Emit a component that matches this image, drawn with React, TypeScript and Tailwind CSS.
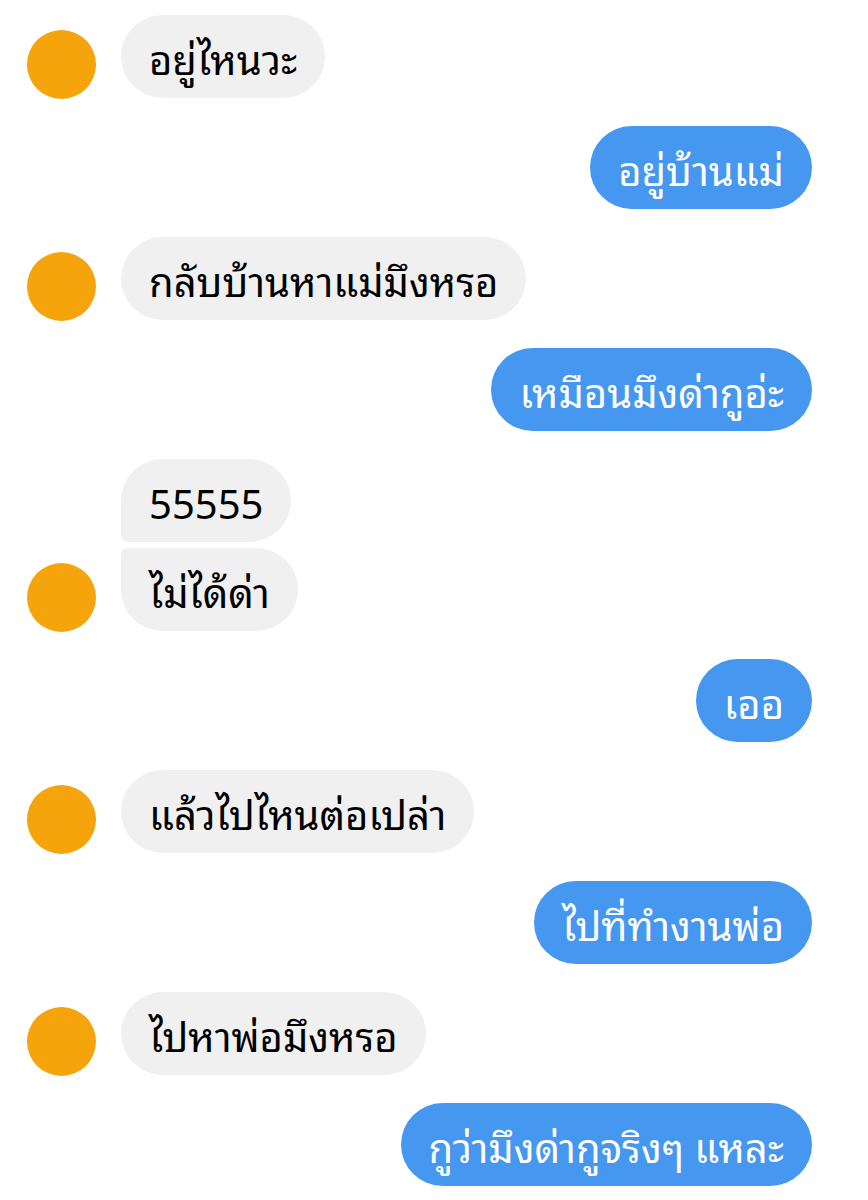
const Avatar = () => <div className="w-[69px] h-[69px] rounded-full bg-[#f6a40b] shrink-0 mb-[-1px]" />;

function Left({ lines }: { lines: string[] }) {
  return (
    <div className="flex items-end gap-[25px] pl-[27px]">
      <Avatar />
      <div className="flex flex-col items-start gap-[6px]">
        {lines.map((t, i) => {
          const n = lines.length;
          let cls = "rounded-[42px]";
          if (n > 1 && i === 0) cls = "rounded-[42px] rounded-bl-[7px]";
          if (n > 1 && i === n - 1) cls = "rounded-[42px] rounded-tl-[7px]";
          return (
            <div key={i} className={`h-[83px] flex items-center px-[28px] bg-[#f0f0f0] text-black ${cls}`}>
              {t}
            </div>
          );
        })}
      </div>
    </div>
  );
}

function Right({ text }: { text: string }) {
  return (
    <div className="flex justify-end pr-[56px]">
      <div className="h-[83px] flex items-center px-[28px] rounded-[42px] bg-[#4597f0] text-white">{text}</div>
    </div>
  );
}

export default function App() {
  return (
    <div
      className="w-[868px] h-[1200px] bg-white flex flex-col gap-[28px] pt-[15px] text-[40px] overflow-hidden"
      style={{ fontFamily: '"Noto Sans Thai Looped", "Garuda", "Loma", "Tlwg Typo", "Noto Sans Thai", "Liberation Sans", sans-serif' }}
    >
      <Left lines={["อยู่ไหนวะ"]} />
      <Right text="อยู่บ้านแม่" />
      <Left lines={["กลับบ้านหาแม่มึงหรอ"]} />
      <Right text="เหมือนมึงด่ากูอ่ะ" />
      <Left lines={["55555", "ไม่ได้ด่า"]} />
      <Right text="เออ" />
      <Left lines={["แล้วไปไหนต่อเปล่า"]} />
      <Right text="ไปที่ทำงานพ่อ" />
      <Left lines={["ไปหาพ่อมึงหรอ"]} />
      <Right text="กูว่ามึงด่ากูจริงๆ แหละ" />
    </div>
  );
}
